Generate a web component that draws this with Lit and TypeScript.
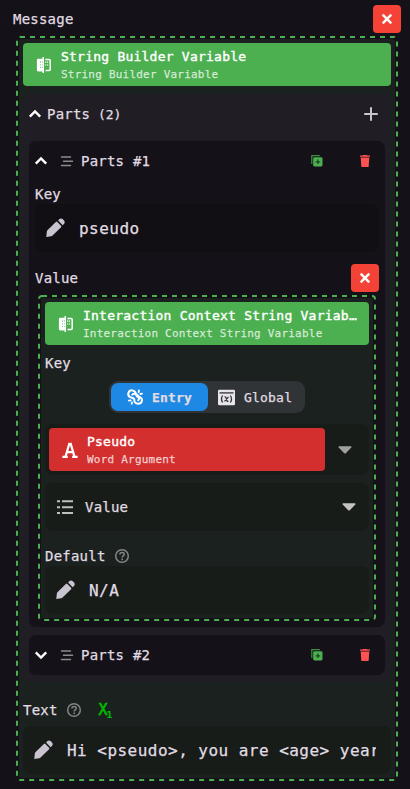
import { LitElement, html, css, svg, nothing } from "lit";
import { customElement, property } from "lit/decorators.js";

const icons: Record<string, unknown> = {
  close: svg`<path d="M3.700 3.700 12.300 12.300M12.300 3.700 3.700 12.300" fill="none" stroke="#fff" stroke-width="2.400"/>`,
  book: svg`<path fill="#fff" fill-rule="evenodd" d="M6.500 0H8v16H6.500v-1.600H2.200Q.9 14.400.9 13.100V3Q.9 1.700 2.200 1.700h4.300zM4 4.600v.800h1v-.8zm2.200 0v.800h.8v-.8zM4 7.400v.800h1v-.8zm2.200 0v.800h.8v-.8zM4 10.200v.800h1v-.8zm2.200 0v.800h.8v-.8z"/>
    <path d="M9.300 2.400h3.900q1 0 1 1v9.200q0 1-1 1H9.500" fill="none" stroke="#fff" stroke-width="1.500"/><path d="M9 5.200h3.400M9 8h3.400" fill="none" stroke="#fff" stroke-width="1.200" stroke-dasharray="1.300 .6"/>`,
  up: svg`<path d="M2.800 10.700 8 5.500l5.200 5.200" fill="none" stroke="#fff" stroke-width="2.400"/>`,
  down: svg`<path d="M2.800 5.300 8 10.500l5.200-5.200" fill="none" stroke="#fff" stroke-width="2.400"/>`,
  plus: svg`<path d="M8 1.200v13.600M1.200 8h13.600" fill="none" stroke="#cac4d0" stroke-width="2"/>`,
  lines: svg`<path d="M2.500 4h9M4.500 8.200h9M2.500 12.400h9" fill="none" stroke="#8b8a8d" stroke-width="1.500" stroke-linecap="round"/>`,
  copy: svg`<path d="M2.800 11V2.700h8" fill="none" stroke="#3f9143" stroke-width="1.200"/><rect x="4.200" y="4.200" width="9.300" height="9.200" rx="1.300" fill="#4caf50"/><path d="M8.850 6.600v4.400M6.600 8.800h4.500" stroke="#1b4a20" stroke-width="1.300"/>`,
  trash: svg`<path fill="#ff5252" d="M6 2h4l.5.500H13v1.200H3V2.500h2.500zM3.700 4.600h8.600l-.6 8.600q-.1.900-1 .9H5.300q-.9 0-1-.9z"/>`,
  pencil: svg`<path fill="#cac4d0" d="M.2 15.900.7 11.500q.1-.7.700-1.300L8.300 3.300q.6-.6 1.200 0l3.200 3.200q.6.600 0 1.200l-7.200 7q-.5.500-1.100.6zM10.200 2l1.100-1.100Q12.900-.4 14.600 1.400q1.900 1.800.7 3.400L14 6z"/>`,
  help: svg`<circle cx="8" cy="8" r="6.300" fill="none" stroke="#858586" stroke-width="1.500"/><path d="M5.900 6.500C5.900 3.700 10.200 3.900 10.200 6.300 10.200 7.900 8.200 7.900 8.200 9.500" fill="none" stroke="#858586" stroke-width="1.500"/><rect x="7.400" y="10.500" width="1.600" height="1.600" fill="#858586"/>`,
  link: svg`<g fill="none" stroke="#fff" stroke-width="2" stroke-linecap="round"><path d="M6.300 9.300 3.100 8.200C-.4 6.200 1.500.9 5.200 1.400c2.500.3 3.900 2 3.600 4.300"/><path d="M5.300 5.700c1.300-1.500 3.500-1.200 5.300.5 1.800 1.800 2 3.700.6 5.100"/><path d="M9.700 7.500l3.200.6c3.500 1.600 2.200 6.700-1.600 6.700-2.800-.2-4.600-2-4-4.500"/><path d="M11.600 3.200l.4-1.800M13.400 5l1.600-.3M3.700 11.400l-1.800.3M5 13.300l-.3 1.500" stroke-width="1.800"/></g>`,
  global: svg`<rect y=".3" width="17" height="15.400" rx="1.300" fill="#e8e5ea"/><path d="M1.500 3.400h14" stroke="#303436" stroke-width="1.300"/><g fill="none" stroke="#303436" stroke-width="1.300"><path d="M4.600 6q-2.200 3.500 0 7M12.400 6q2.200 3.500 0 7M6.500 7.500q1.300-.4 1.600.9l.6 2.200q.3 1.500 1.700 1M10.500 7.400 6.500 11.900"/></g>`,
  serifA: svg`<path d="M7.600.9 3.500 14.600M8.400.9l4.100 13.700M4.700 10.200h6.600M.4 14.900h5.400M10.200 14.900h5.400" fill="none" stroke="#fff" stroke-width="2.200"/>`,
  list: svg`<path d="M0 2.300h3M0 8.200h3M0 14h3M5 2.300h11M5 8.200h11M5 14h11" fill="none" stroke="#bfbfbd" stroke-width="2.100"/>`,
  caret: svg`<path d="M1.700 4.200h12.600v1.200L8.800 11.300q-.8.600-1.600 0L1.700 5.400z" fill="currentColor"/>`,
};

const icon = (name: string, size = 16, cls = "") =>
  html`<svg class="icon ${cls}" width=${size} height=${size} viewBox=${name === "global" ? "0 0 17 16" : "0 0 16 16"}>${icons[name]}</svg>`;

const base = css`
  * { box-sizing: border-box; }
  .icon { display: block; flex: none; overflow: visible; }
`;

@customElement("dashed-box")
class DashedBox extends LitElement {
  static styles = [base, css`
    :host { display: block; position: relative; border: 3px solid transparent; padding: 4px; background: #1b211e; background-clip: padding-box; border-radius: 5px; }
    .outline { position: absolute; top: -2px; left: -2px; width: calc(100% + 4px); height: calc(100% + 4px); overflow: visible; pointer-events: none; }
    .stroke { width: 100%; height: 100%; fill: none; stroke: #4caf50; stroke-width: 2; stroke-dasharray: 5 5; }
  `];
  render() {
    return html`<svg class="outline"><rect class="stroke" rx="3"></rect></svg><slot></slot>`;
  }
}

@customElement("entry-banner")
class EntryBanner extends LitElement {
  @property() heading = "";
  @property() kind = "";
  @property() glyph = "book";
  static styles = [base, css`
    :host { display: flex; align-items: center; height: 43px; padding: 0 12px 0 13px; border-radius: 4px; background: var(--banner, #4caf50); }
    .body { flex: 1; min-width: 0; margin-left: 9px; padding-top: 2px; }
    .title, .sub { white-space: nowrap; overflow: hidden; text-overflow: ellipsis; }
    .title { font-size: 13px; letter-spacing: .23px; line-height: 17px; color: #fff; -webkit-text-stroke: .4px #fff; }
    .sub { font-size: 11px; letter-spacing: .22px; line-height: 17px; margin-top: 1px; color: rgba(255,255,255,.7); }
  `];
  render() {
    return html`${icon(this.glyph)}<div class="body"><div class="title">${this.heading}</div><div class="sub">${this.kind}</div></div>`;
  }
}

@customElement("text-input")
class TextInput extends LitElement {
  @property() value = "";
  static styles = [base, css`
    :host { display: flex; align-items: center; height: 48px; padding: 0 15px 0 11px; border-radius: 8px; background: var(--field, #171c19); }
    .pen { margin-top: -2px; }
    .value { flex: 1; min-width: 0; margin-left: 14px; padding-top: 2px; overflow: hidden; white-space: nowrap; font-size: 16px; letter-spacing: .47px; line-height: 24px; }
  `];
  render() {
    return html`${icon("pencil", 19, "pen")}<div class="value">${this.value}</div>`;
  }
}

@customElement("part-head")
class PartHead extends LitElement {
  @property() label = "";
  @property({ type: Boolean }) open = false;
  static styles = [base, css`
    :host { display: flex; align-items: center; height: 40px; padding: 0 12px 0 4px; }
    .lines { margin-left: 10px; }
    .name { flex: 1; margin-left: 6px; }
    .trash { margin-left: 32px; }
  `];
  render() {
    return html`${icon(this.open ? "up" : "down")}${icon("lines", 16, "lines")}<span class="name">${this.label}</span>${icon("copy")}${icon("trash", 16, "trash")}`;
  }
}

@customElement("app-root")
class AppRoot extends LitElement {
  static styles = [base, css`
    :host { display: block; height: 789px; overflow: hidden; background: #141118; color: #e0dce3; font: 14px/20px "DejaVu Sans Mono", monospace; letter-spacing: .22px; -webkit-text-stroke: .25px; padding: 5px 9px 0 13px; }
    .row { display: flex; align-items: center; justify-content: space-between; height: 28px; }
    .close { display: grid; place-items: center; width: 28px; height: 28px; border-radius: 4px; background: #f44336; }
    .outer { height: 745px; margin: 3px 3px 0; }
    .parts { display: flex; flex-direction: column; height: 588px; margin-top: 8px; padding: 0 6px 7px; border-radius: 8px; background: #201d24; }
    .parts-head { display: flex; align-items: center; height: 40px; margin-bottom: 7px; padding-right: 6px; }
    .chev { margin-left: -2px; }
    .parts-name { flex: 1; margin-left: 4px; }
    .count { margin-left: -1px; font-size: 13px; letter-spacing: 0; }
    .card { border-radius: 7px; background: #141118; }
    .first { height: 486px; margin-bottom: 8px; }
    .card-body { padding: 3px 6px 0; }
    .label { display: flex; align-items: center; height: 20px; }
    .field-dark { --field: #110f13; }
    .value-row { margin-top: 12px; }
    .inner { height: 326px; margin: 3px 3px 0; }
    .key { margin-top: 8px; }
    .segments { display: flex; width: 196px; height: 32px; margin: 8px auto 0; padding: 2px; border-radius: 9px; background: #303436; font-size: 13px; letter-spacing: .2px; }
    .segment { display: flex; align-items: center; flex: 1; padding: 0 0 0 10px; gap: 9px; border-radius: 7px; }
    .segment span { padding-top: 1px; }
    .active { flex: none; width: 97px; padding-left: 16px; background: #1e88e5; font-weight: bold; }
    .select { display: flex; align-items: center; justify-content: space-between; height: 48px; margin-top: 8px; padding: 0 12px; border-radius: 8px; background: #171c19; }
    .entry { height: 51px; margin-top: 11px; padding: 0 16px 0 4px; }
    .red { --banner: #d32f2f; width: 276px; }
    .choice { flex: 1; margin-left: 12px; }
    .caret { color: #c4c3c3; }
    .entry .caret { color: #9fa09f; }
    .default { margin-top: 15px; }
    .help { margin-left: 8px; }
    .text-label { margin-top: 18px; margin-bottom: 6px; }
    .variable { display: flex; align-items: flex-end; height: 20px; padding-top: 1px; margin-left: 17px; color: #00ba00; font-size: 15px; line-height: 19px; letter-spacing: 0; -webkit-text-stroke: .7px; }
    .subscript { margin-left: -1px; font-size: 9px; font-weight: bold; line-height: 10px; -webkit-text-stroke: .2px; }
  `];

  closeButton() {
    return html`<div class="close">${icon("close")}</div>`;
  }

  label(text: string, cls = "", help = false) {
    return html`<div class="label ${cls}">${text}${help ? icon("help", 16, "help") : nothing}</div>`;
  }

  render() {
    return html`
      <div class="row"><span>Message</span>${this.closeButton()}</div>
      <dashed-box class="outer">
        <entry-banner heading="String Builder Variable" kind="String Builder Variable"></entry-banner>
        <div class="parts">
          <div class="parts-head">${icon("up", 16, "chev")}<span class="parts-name">Parts <span class="count">(2)</span></span>${icon("plus")}</div>
          <div class="card first">
            <part-head label="Parts #1" open></part-head>
            <div class="card-body">
              ${this.label("Key")}
              <text-input class="field-dark" value="pseudo"></text-input>
              <div class="row value-row"><span>Value</span>${this.closeButton()}</div>
              <dashed-box class="inner">
                <entry-banner heading="Interaction Context String Variable" kind="Interaction Context String Variable"></entry-banner>
                ${this.label("Key", "key")}
                <div class="segments">
                  <div class="segment active">${icon("link")}<span>Entry</span></div>
                  <div class="segment">${icon("global", 17)}<span>Global</span></div>
                </div>
                <div class="select entry">
                  <entry-banner class="red" glyph="serifA" heading="Pseudo" kind="Word Argument"></entry-banner>
                  ${icon("caret", 16, "caret")}
                </div>
                <div class="select">${icon("list")}<span class="choice">Value</span>${icon("caret", 16, "caret")}</div>
                ${this.label("Default", "default", true)}
                <text-input value="N/A"></text-input>
              </dashed-box>
            </div>
          </div>
          <div class="card"><part-head label="Parts #2"></part-head></div>
        </div>
        <div class="label text-label">Text${icon("help", 16, "help")}<span class="variable">X<span class="subscript">1</span></span></div>
        <text-input value="Hi &lt;pseudo&gt;, you are &lt;age&gt; years old"></text-input>
      </dashed-box>
    `;
  }
}
